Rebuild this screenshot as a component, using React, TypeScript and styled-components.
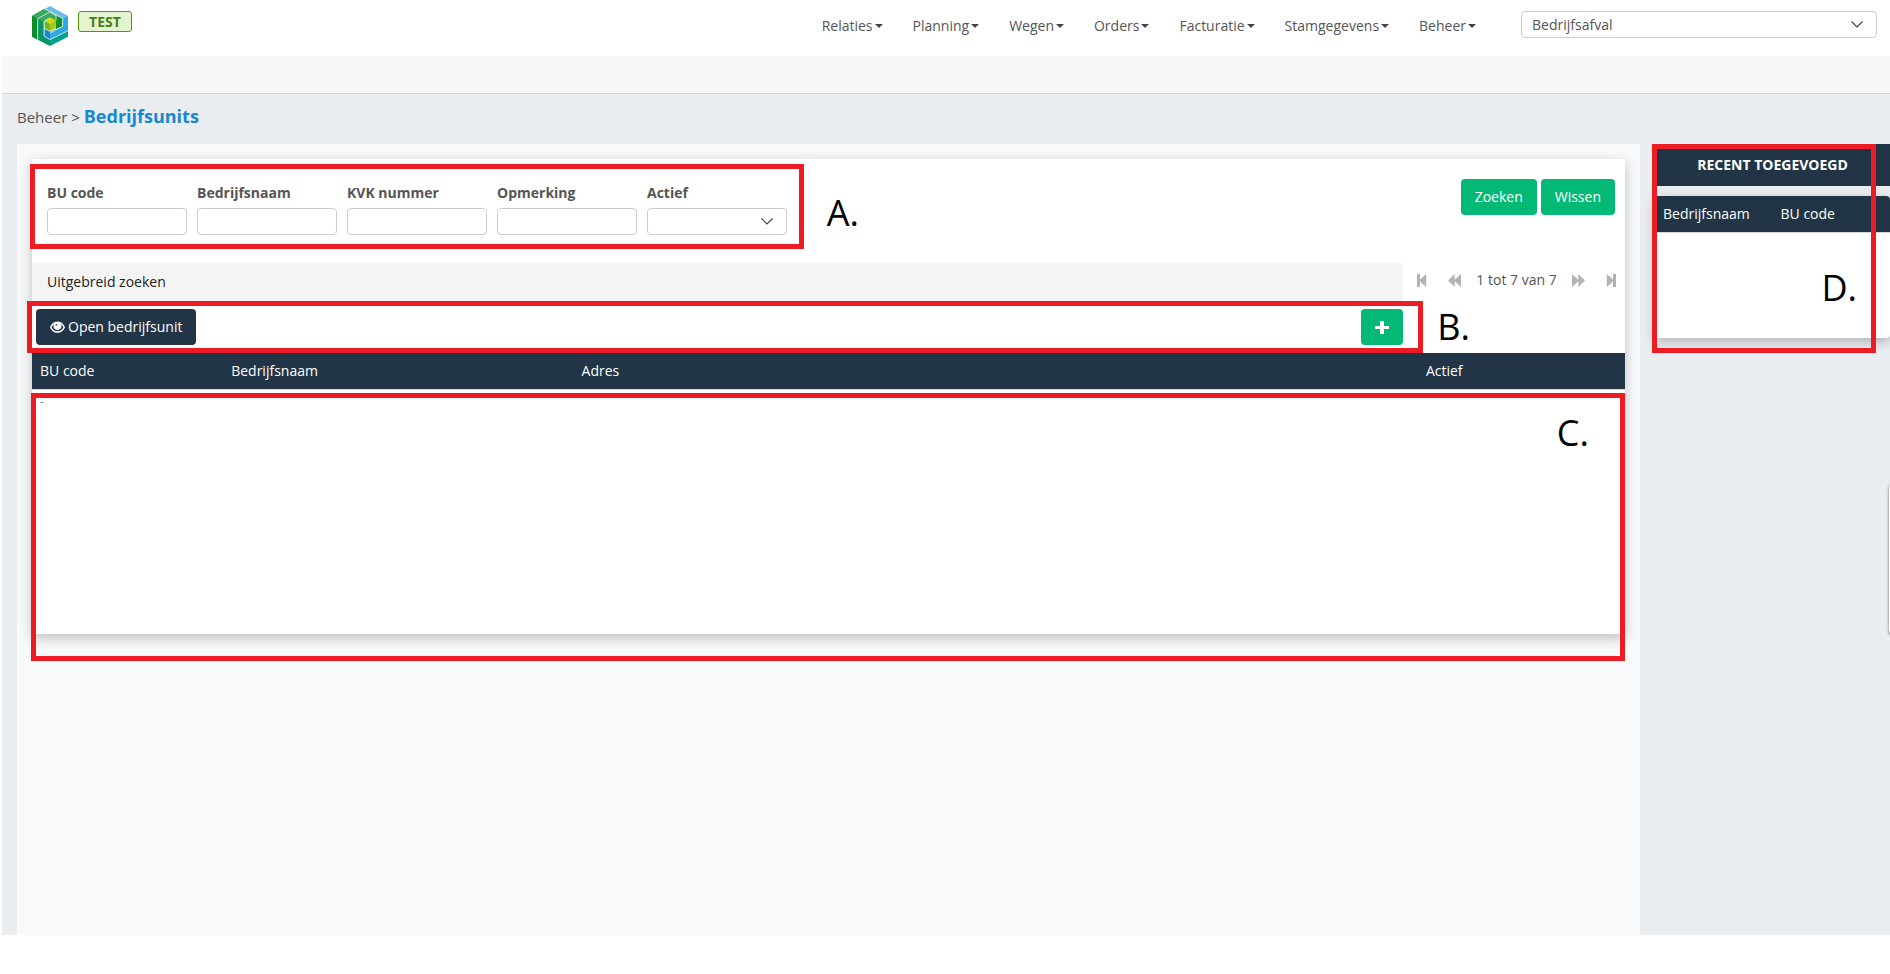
import React from "react";
import styled, { createGlobalStyle } from "styled-components";

const GlobalStyle = createGlobalStyle`
  * { box-sizing: border-box; }
  body {
    margin: 0;
    background: #fff;
    color: #555;
    font: 14px/20px "Open Sans", "Noto Sans", sans-serif;
    overflow-x: hidden;
  }
  button, input, select { font: inherit; color: inherit; }
`;

const navy = "#213547";
const green = "#04b976";

const Page = styled.div`
  display: flex;
  flex-direction: column;
  min-height: 100vh;
  padding: 0 0 39px 2px;
`;

const Header = styled.header`
  display: flex;
  align-items: flex-start;
  height: 56px;
  padding: 6px 13px 0 30px;
`;

const Logo = styled.svg`
  display: block;
  width: 36px;
  height: 40px;
`;

const EnvironmentBadge = styled.span`
  margin: 5px auto 0 10px;
  width: 54px;
  height: 21px;
  border: 1px solid #4e9a06;
  border-radius: 3px;
  background: #e4f4d0;
  color: #4a7d10;
  font-weight: 700;
  line-height: 20px;
  text-align: center;
`;

const Nav = styled.nav`
  display: flex;
  gap: 30px;
  margin: 10px 45px 0 0;
`;

const NavLink = styled.a`
  display: flex;
  align-items: center;
  color: #555;
  text-decoration: none;
  white-space: nowrap;
  &::after {
    content: "";
    margin-left: 2px;
    border: 4px solid transparent;
    border-top-color: #444;
    border-bottom: 0;
  }
`;

const SelectWrap = styled.div<{ $wide?: boolean }>`
  position: relative;
  width: ${(p) => (p.$wide ? "356px" : "140px")};
  margin-top: ${(p) => (p.$wide ? "5px" : "0")};
  svg {
    position: absolute;
    right: 13px;
    top: 9px;
    pointer-events: none;
  }
`;

const Select = styled.select`
  appearance: none;
  display: block;
  width: 100%;
  height: 27px;
  padding: 0 30px 0 10px;
  border: 1px solid #ccc;
  border-radius: 4px;
  background: #fff;
`;

const SubBar = styled.div`
  height: 38px;
  background: #f8f8f8;
  border-bottom: 1px solid #d3d6d9;
`;

const Content = styled.main`
  flex: 1;
  display: flex;
  flex-direction: column;
  background: #e9edf0;
  padding-left: 15px;
`;

const Breadcrumb = styled.div`
  display: flex;
  align-items: baseline;
  gap: 4px;
  height: 50px;
  padding-top: 10px;
  font-size: 15px;
`;

const PageTitle = styled.h1`
  margin: 0;
  color: #1788cf;
  font-size: 18px;
  line-height: 24px;
  font-weight: 700;
`;

const Columns = styled.div`
  flex: 1;
  display: flex;
  gap: 15px;
`;

const Panel = styled.section`
  flex: 1;
  min-width: 0;
  padding: 15px;
  background: #f8f9fb;
`;

const Card = styled.div`
  background: #fff;
  box-shadow: 0 4px 12px rgba(0, 0, 0, 0.24);
`;

const SearchForm = styled.form`
  display: flex;
  justify-content: space-between;
  align-items: flex-start;
  height: 104px;
  padding: 20px 10px 0 15px;
`;

const Fields = styled.div`
  position: relative;
  display: flex;
  gap: 10px;
  padding-top: 4px;
`;

const Field = styled.div`
  display: flex;
  flex-direction: column;
  gap: 5px;
`;

const Label = styled.label`
  font-weight: 700;
`;

const TextInput = styled.input`
  width: 140px;
  height: 27px;
  padding: 0 10px;
  border: 1px solid #ccc;
  border-radius: 4px;
  background: #fff;
`;

const Actions = styled.div`
  display: flex;
  gap: 4px;
`;

const Button = styled.button<{ $dark?: boolean }>`
  display: flex;
  align-items: center;
  justify-content: center;
  gap: 3px;
  height: 36px;
  padding: 0 14px;
  border: 0;
  border-radius: 4px;
  background: ${(p) => (p.$dark ? navy : green)};
  color: #fff;
  white-space: nowrap;
`;

const SplitRow = styled.div`
  display: grid;
  grid-template-columns: 1fr 222px;
`;

const ExtendedSearch = styled.button`
  height: 38px;
  padding: 0 15px;
  border: 0;
  background: #f4f4f4;
  color: #222;
  text-align: left;
`;

const Pager = styled.div`
  display: flex;
  align-items: center;
  justify-content: space-between;
  height: 34px;
  padding: 0 9px 0 14px;
`;

const PagerGroup = styled.div`
  display: flex;
  align-items: center;
  gap: 15px;
`;

const PagerButton = styled.button`
  display: flex;
  padding: 0;
  border: 0;
  background: none;
  color: #b3b3b3;
`;

const Toolbar = styled.div`
  position: relative;
  display: flex;
  align-items: center;
  justify-content: space-between;
  height: 52px;
  padding-left: 4px;
`;

const ListArea = styled.div<{ $min: number }>`
  position: relative;
  min-height: ${(p) => p.$min}px;
`;

const Table = styled.table`
  width: 100%;
  border-collapse: collapse;
  table-layout: fixed;
`;

const Th = styled.th<{ $w?: string }>`
  width: ${(p) => p.$w ?? "auto"};
  height: 36px;
  padding: 0 8px;
  background: ${navy};
  color: #fff;
  font-weight: 400;
  text-align: left;
  box-shadow: 0 1px 0 #d5d8db;
`;

const Td = styled.td`
  padding: 2px 8px;
  color: #666;
  font-size: 10px;
`;

const Sidebar = styled.aside`
  position: relative;
  width: 235px;
`;

const SideTitle = styled.h2`
  display: flex;
  align-items: center;
  justify-content: center;
  height: 42px;
  margin: 0 0 10px;
  background: ${navy};
  color: #fff;
  font-size: 14px;
  font-weight: 700;
`;

const SideCard = styled(Card)`
  border-radius: 4px;
  th:last-child { border-top-right-radius: 4px; }
`;

const Marker = styled.div<{ $inset: string }>`
  position: absolute;
  inset: ${(p) => p.$inset};
  border: 5px solid #ed1c24;
  pointer-events: none;
`;

const MarkerLetter = styled.span<{ $top: number; $right: number }>`
  position: absolute;
  top: ${(p) => p.$top}px;
  right: ${(p) => p.$right}px;
  color: #000;
  font-size: 36px;
  line-height: 48px;
  white-space: nowrap;
  pointer-events: none;
`;

const DrawerHandle = styled.div`
  position: fixed;
  top: 484px;
  right: -9px;
  width: 10px;
  height: 150px;
  border-radius: 4px;
  background: #fff;
  box-shadow: 0 1px 3px rgba(0, 0, 0, 0.6);
`;

const Chevron = () => (
  <svg width="14" height="9" viewBox="0 0 14 9" fill="none" stroke="#444" strokeWidth="1.2" aria-hidden>
    <path d="M1.5 1.5 7 7l5.5-5.5" />
  </svg>
);

const StepIcon = ({ flip = false }) => (
  <svg width="10" height="13" viewBox="0 0 10 13" fill="currentColor" aria-hidden>
    <g transform={flip ? "translate(10 0) scale(-1 1)" : undefined}>
      <path d="M0 0h3v5.6L9.2 0v13L3 7.4V13H0z" />
    </g>
  </svg>
);

const SkipIcon = ({ flip = false }) => (
  <svg width="13" height="13" viewBox="0 0 13 13" fill="currentColor" aria-hidden>
    <g transform={flip ? "translate(13 0) scale(-1 1)" : undefined}>
      <path d="M0 6.5 6.7 0v5.7L13 0v13L6.7 7.3V13z" />
    </g>
  </svg>
);

const EyeIcon = () => (
  <svg width="15" height="13" viewBox="0 0 15 13" aria-hidden>
    <path fill="#fff" fillRule="evenodd" d="M7.5.5C3.8.5 1 3.600 0 6.200c1 2.900 3.800 5.600 7.500 5.600s6.500-2.700 7.500-5.600C14 3.600 11.200.5 7.500.5zM7.500 10.300c-3 0-5-2-5.900-4.100C2.200 4.800 3.200 3.600 4.300 2.900a3.900 3.900 0 1 0 6.400 0c1.100.7 2.100 1.900 2.700 3.300-.9 2.100-2.900 4.100-5.900 4.100z" />
    <path fill={navy} d="M5.400 4.700c.2-1 1-1.700 2-1.700v1c-.5 0-.9.3-1.100.8z" />
  </svg>
);

const PlusIcon = () => (
  <svg width="14" height="13" viewBox="0 0 14 13" fill="#fff" aria-hidden>
    <path d="M5 0h4v5h5v3H9v5H5V8H0V5h5z" />
  </svg>
);

const LogoMark = () => (
  <Logo viewBox="0 0 108 120" role="img" aria-label="Logo">
    <path fill="#6bbbe8" d="M54 0 108 30 90 40 38 9z" />
    <path fill="#2fa6e0" d="M108 30v44L54 101V80l37-20V38z" />
    <path fill="#38a85c" d="M0 29 36 8l56 29-19 11-20-12-35 20z" />
    <path fill="#0c8c2c" d="M0 29 17 38v64L0 92z" />
    <path fill="#3aa866" d="M17 38 53 18 72 29 36 48z" />
    <path fill="#089465" d="M17 38 36 48v40l18 12v20L17 101z" />
    <path fill="#00a48c" d="M54 100 108 74v18L54 120z" />
    <path fill="#148f2d" d="M71 31 91 37v24L71 70z" />
    <path fill="#1386d0" d="M37 68 54 77v23L37 91z" />
    <path fill="#37a8e2" d="M54 77 71 69v20L54 100z" />
    <path fill="#ced908" d="M37 43 54 34l17 9-17 10z" />
    <path fill="#6fb62a" d="M37 43 54 53v22L37 66z" />
    <path fill="#a5c715" d="M71 43 54 53v22L71 66z" />
    <g fill="none" stroke="#d9f1e6" strokeWidth="2.5">
      <path d="M38 8 92 37v24L54 81" />
      <path d="M17 102V38L53 18 72 29v14" />
      <path d="M36 48v42l18 11 54-27" />
      <path d="M36 48 54 37" />
    </g>
  </Logo>
);

const navItems = ["Relaties", "Planning", "Wegen", "Orders", "Facturatie", "Stamgegevens", "Beheer"];

const textFields = [
  { id: "bu-code", label: "BU code" },
  { id: "bedrijfsnaam", label: "Bedrijfsnaam" },
  { id: "kvk-nummer", label: "KVK nummer" },
  { id: "opmerking", label: "Opmerking" },
];

export default function App() {
  return (
    <Page>
      <GlobalStyle />
      <Header>
        <LogoMark />
        <EnvironmentBadge>TEST</EnvironmentBadge>
        <Nav>
          {navItems.map((item) => (
            <NavLink key={item} href="#">{item}</NavLink>
          ))}
        </Nav>
        <SelectWrap $wide>
          <Select aria-label="Bedrijfsunit" defaultValue="Bedrijfsafval">
            <option>Bedrijfsafval</option>
          </Select>
          <Chevron />
        </SelectWrap>
      </Header>
      <SubBar />
      <Content>
        <Breadcrumb>
          <span>Beheer &gt;</span>
          <PageTitle>Bedrijfsunits</PageTitle>
        </Breadcrumb>
        <Columns>
          <Panel>
            <Card>
              <SearchForm onSubmit={(e) => e.preventDefault()}>
                <Fields>
                  {textFields.map((f) => (
                    <Field key={f.id}>
                      <Label htmlFor={f.id}>{f.label}</Label>
                      <TextInput id={f.id} type="text" />
                    </Field>
                  ))}
                  <Field>
                    <Label htmlFor="actief">Actief</Label>
                    <SelectWrap>
                      <Select id="actief" defaultValue="">
                        <option value=""></option>
                      </Select>
                      <Chevron />
                    </SelectWrap>
                  </Field>
                  <Marker $inset="-15px -17px -14px -17px" />
                  <MarkerLetter $top={10} $right={-72}>A.</MarkerLetter>
                </Fields>
                <Actions>
                  <Button type="submit">Zoeken</Button>
                  <Button type="reset">Wissen</Button>
                </Actions>
              </SearchForm>
              <SplitRow>
                <ExtendedSearch type="button">Uitgebreid zoeken</ExtendedSearch>
                <Pager>
                  <PagerButton type="button" aria-label="Eerste"><StepIcon /></PagerButton>
                  <PagerGroup>
                    <PagerButton type="button" aria-label="Vorige"><SkipIcon /></PagerButton>
                    <span>1 tot 7 van 7</span>
                    <PagerButton type="button" aria-label="Volgende"><SkipIcon flip /></PagerButton>
                  </PagerGroup>
                  <PagerButton type="button" aria-label="Laatste"><StepIcon flip /></PagerButton>
                </Pager>
                <Toolbar>
                  <Button type="button" $dark><EyeIcon />Open bedrijfsunit</Button>
                  <Button type="button" aria-label="Toevoegen"><PlusIcon /></Button>
                  <Marker $inset="0 -20px 0 -5px" />
                  <MarkerLetter $top={2} $right={-67}>B.</MarkerLetter>
                </Toolbar>
              </SplitRow>
              <ListArea $min={281}>
                <Table>
                  <thead>
                    <tr>
                      <Th $w="12%">BU code</Th>
                      <Th $w="22%">Bedrijfsnaam</Th>
                      <Th $w="53%">Adres</Th>
                      <Th>Actief</Th>
                    </tr>
                  </thead>
                  <tbody>
                    <tr><Td colSpan={4}>-</Td></tr>
                  </tbody>
                </Table>
                <Marker $inset="40px 0 -27px -1px" />
                <MarkerLetter $top={56} $right={36}>C.</MarkerLetter>
              </ListArea>
            </Card>
          </Panel>
          <Sidebar>
            <SideTitle>RECENT TOEGEVOEGD</SideTitle>
            <SideCard>
              <ListArea $min={142}>
                <Table>
                  <thead>
                    <tr>
                      <Th $w="50%">Bedrijfsnaam</Th>
                      <Th>BU code</Th>
                    </tr>
                  </thead>
                </Table>
                <Marker $inset="-52px 14px -15px -3px" />
                <MarkerLetter $top={68} $right={33}>D.</MarkerLetter>
              </ListArea>
            </SideCard>
          </Sidebar>
        </Columns>
      </Content>
      <DrawerHandle />
    </Page>
  );
}
